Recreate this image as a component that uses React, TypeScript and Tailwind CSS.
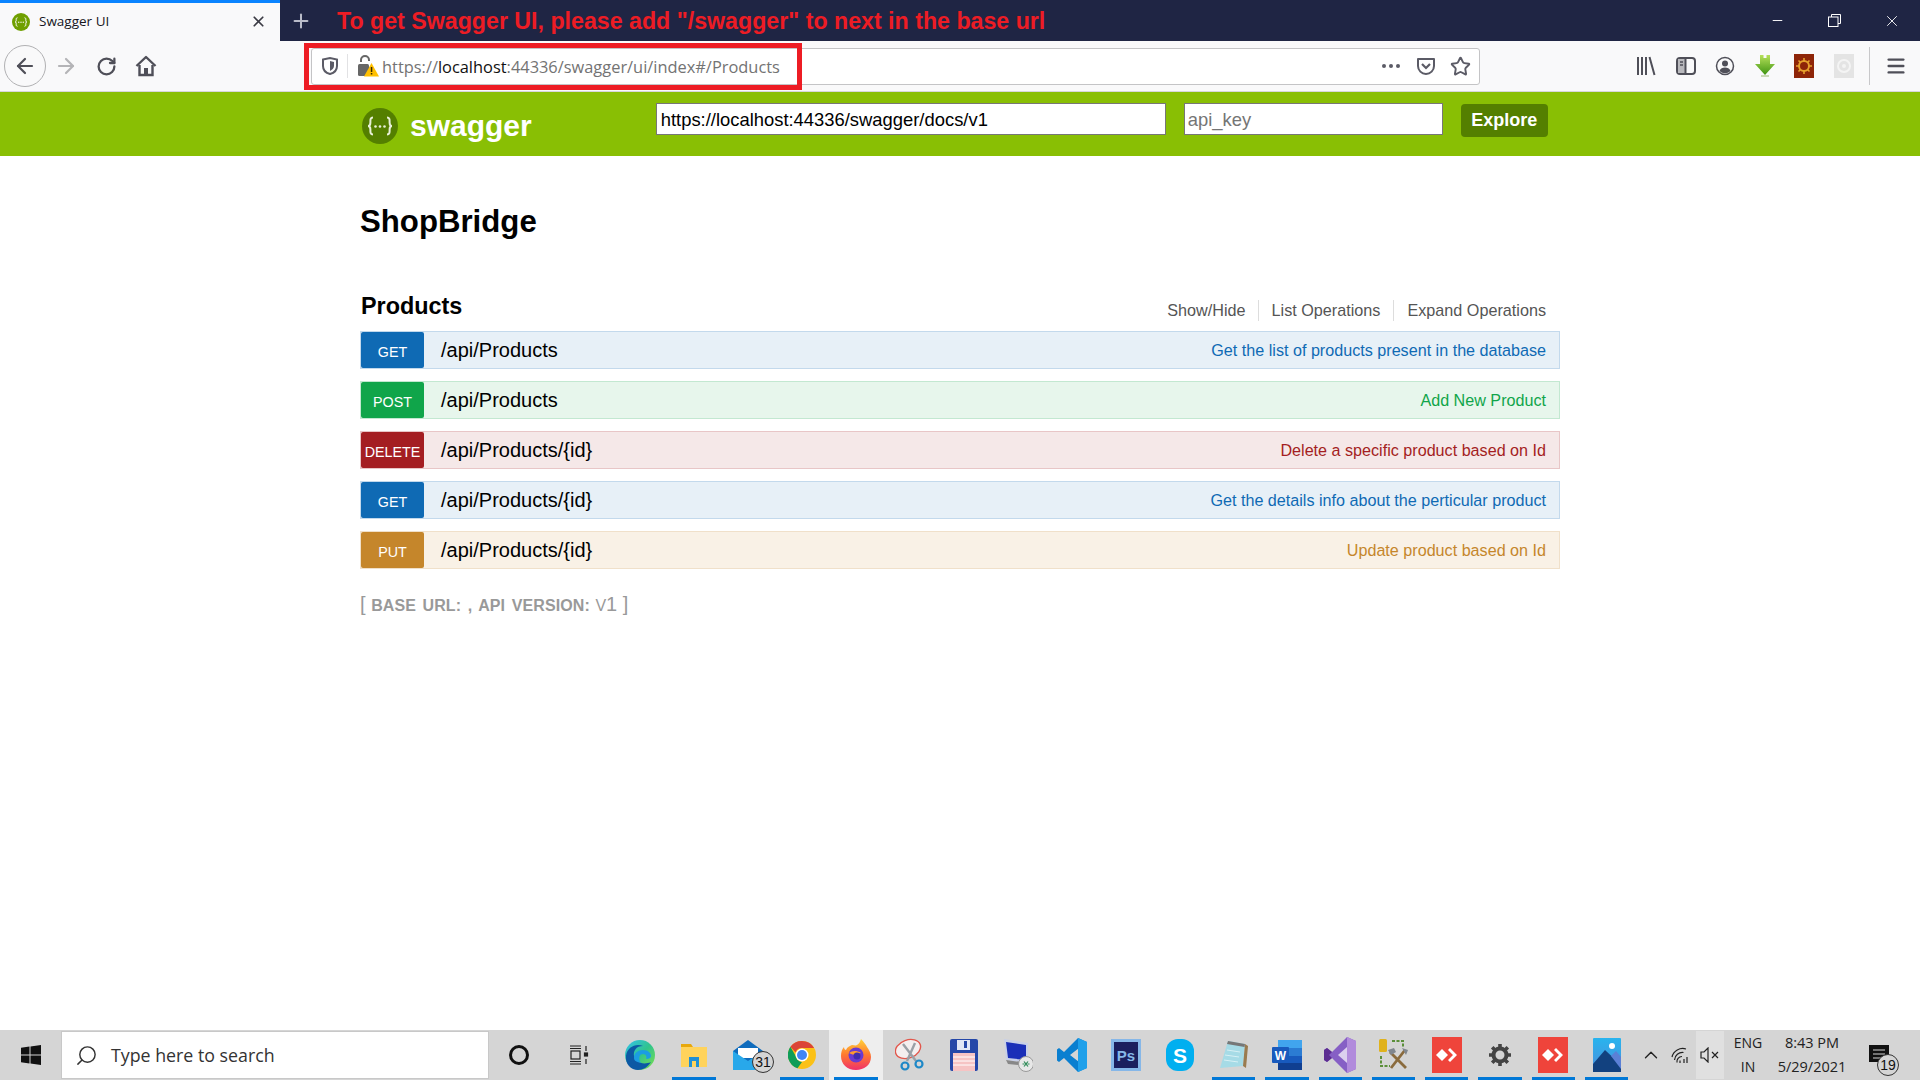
import { Minus, Plus, RotateCw, ArrowLeft, ArrowRight, X, Star, Menu, ChevronUp, Search } from "lucide-react";
import type { ReactNode } from "react";

// Swagger endpoints listed on the page
const endpoints = [
  {
    method: "GET",
    path: "/api/Products",
    summary: "Get the list of products present in the database",
    bar: "bg-[#e7f0f7] border-[#c3d9ec]",
    badge: "bg-[#0f6ab4]",
    text: "text-[#0f6ab4]",
  },
  {
    method: "POST",
    path: "/api/Products",
    summary: "Add New Product",
    bar: "bg-[#e7f6ec] border-[#c3e8d1]",
    badge: "bg-[#10a54a]",
    text: "text-[#10a54a]",
  },
  {
    method: "DELETE",
    path: "/api/Products/{id}",
    summary: "Delete a specific product based on Id",
    bar: "bg-[#f5e8e8] border-[#e8c6c7]",
    badge: "bg-[#a41e22]",
    text: "text-[#a41e22]",
  },
  {
    method: "GET",
    path: "/api/Products/{id}",
    summary: "Get the details info about the perticular product",
    bar: "bg-[#e7f0f7] border-[#c3d9ec]",
    badge: "bg-[#0f6ab4]",
    text: "text-[#0f6ab4]",
  },
  {
    method: "PUT",
    path: "/api/Products/{id}",
    summary: "Update product based on Id",
    bar: "bg-[#f9f1e6] border-[#f0e0ca]",
    badge: "bg-[#c5862b]",
    text: "text-[#c5862b]",
  },
];

const SwaggerMark = ({ size, bg, fg }: { size: number; bg: string; fg: string }) => (
  <svg width={size} height={size} viewBox="0 0 36 36">
    <circle cx="18" cy="18" r="18" fill={bg} />
    <path
      d="M11 9.500c-3 0-2.600 2.500-2.600 5 0 2-.6 3.500-2.400 3.500 1.800 0 2.400 1.500 2.400 3.500 0 2.500-.4 5 2.600 5M25 9.500c3 0 2.600 2.500 2.600 5 0 2 .6 3.500 2.400 3.500-1.800 0-2.400 1.500-2.400 3.500 0 2.500.4 5-2.600 5"
      fill="none"
      stroke={fg}
      strokeWidth="2"
    />
    <circle cx="13.500" cy="18.500" r="1.300" fill={fg} />
    <circle cx="18" cy="18.500" r="1.300" fill={fg} />
    <circle cx="22.500" cy="18.500" r="1.300" fill={fg} />
  </svg>
);

const ShieldIcon = () => (
  <svg width="18" height="20" viewBox="0 0 18 20" fill="none">
    <path d="M2 3.500 9 2l7 1.500V10c0 4-3 7-7 8-4-1-7-4-7-8z" stroke="#5b5b66" strokeWidth="2" />
    <path d="M9 5l4 1v4c0 2-2 4-4 5z" fill="#5b5b66" />
  </svg>
);

const LockWarnIcon = () => (
  <svg width="22" height="24" viewBox="0 0 22 24">
    <path d="M4 8V6a4 4 0 0 1 8 0v1" fill="none" stroke="#666" strokeWidth="2" />
    <rect x="1" y="10" width="11" height="12" rx="1.500" fill="#666" />
    <path d="M14.500 9 22 22.500H7z" fill="#ffbf00" />
    <rect x="13.800" y="13" width="1.500" height="5" fill="#3b2a00" />
    <rect x="13.800" y="19" width="1.500" height="1.500" fill="#3b2a00" />
  </svg>
);

const HomeIcon = () => (
  <svg width="22" height="22" viewBox="0 0 22 22" fill="none">
    <path d="M1.500 11 11 2l9.500 9" stroke="#4f4f58" strokeWidth="2.400" strokeLinejoin="round" />
    <path d="M4.500 10v10h13V10" stroke="#4f4f58" strokeWidth="2.400" />
    <rect x="9" y="13" width="4" height="7" fill="#4f4f58" />
  </svg>
);

const PocketIcon = () => (
  <svg width="20" height="20" viewBox="0 0 20 20" fill="none">
    <path d="M2 3h16v7a8 8 0 0 1-16 0z" stroke="#5b5b66" strokeWidth="2" strokeLinejoin="round" />
    <path d="m6 8 4 4 4-4" stroke="#5b5b66" strokeWidth="2.200" />
  </svg>
);

const LibraryIcon = () => (
  <svg width="20" height="20" viewBox="0 0 20 20" stroke="#4f4f58" strokeWidth="2" fill="none">
    <path d="M2 1v18M6 1v18M10 1v18M13.500 1l5 18" />
  </svg>
);

const SidebarIcon = () => (
  <svg width="20" height="20" viewBox="0 0 20 20" fill="none">
    <rect x="1" y="2" width="18" height="16" rx="3" stroke="#4f4f58" strokeWidth="2" />
    <rect x="2" y="3" width="7" height="14" fill="#b9b9bd" />
    <path d="M9.500 2v16" stroke="#4f4f58" strokeWidth="2" />
    <path d="M4 6h3M4 9h3" stroke="#4f4f58" strokeWidth="1.500" />
  </svg>
);

const ProfileIcon = () => (
  <svg width="20" height="20" viewBox="0 0 20 20" fill="none">
    <circle cx="10" cy="10" r="8.500" stroke="#4f4f58" strokeWidth="1.500" />
    <circle cx="10" cy="7.500" r="3" fill="#4f4f58" />
    <path d="M4.500 15c1-3 3-3.500 5.500-3.500s4.500.5 5.500 3.500a8 8 0 0 1-11 0z" fill="#4f4f58" />
  </svg>
);

const GreenArrowIcon = () => (
  <svg width="20" height="24" viewBox="0 0 20 24">
    <defs>
      <linearGradient id="dl" x1="0" y1="0" x2="0" y2="1">
        <stop offset="0" stopColor="#b6e05a" />
        <stop offset="1" stopColor="#3f9412" />
      </linearGradient>
    </defs>
    <path d="M0 10h5V1h3.500v3h3V1H15v9h5L10 21z" fill="url(#dl)" />
    <rect x="6" y="21" width="8" height="2" fill="#c9d8b5" />
  </svg>
);

const GearBoxIcon = () => (
  <svg width="20" height="24" viewBox="0 0 20 24">
    <rect width="20" height="24" fill="#8e2508" />
    <circle cx="10" cy="12" r="5" fill="none" stroke="#e6a02c" strokeWidth="2" />
    <path d="M10 4v3M10 17v3M2 12h3M15 12h3M4.500 6.500l2 2M13.500 15.500l2 2M4.500 17.500l2-2M13.500 8.500l2-2" stroke="#e6a02c" strokeWidth="1.600" />
  </svg>
);

const PaleTileIcon = () => (
  <svg width="20" height="24" viewBox="0 0 20 24">
    <rect width="20" height="24" fill="#e4e4e4" />
    <circle cx="10" cy="12" r="6" fill="none" stroke="#f4f4f4" strokeWidth="2" />
    <circle cx="10" cy="12" r="2" fill="#f4f4f4" />
  </svg>
);

const WindowsIcon = () => (
  <svg width="20" height="20" viewBox="0 0 20 20" fill="#111">
    <path d="M0 2.800 8.500 1.600v7.900H0zM9.500 1.500 20 0v9.500H9.500zM0 10.500h8.500v7.900L0 17.200zM9.500 10.500H20V20L9.500 18.500z" />
  </svg>
);

const TaskViewIcon = () => (
  <svg width="20" height="20" viewBox="0 0 20 20" fill="none" stroke="#222" strokeWidth="1.200">
    <path d="M1 1h11M1 19h11M1 3.500h11M1 16.500h11" />
    <rect x="2" y="6" width="9" height="8" />
    <path d="M17 1v5M17 14v5" />
    <rect x="15.500" y="8" width="3" height="3" fill="#222" />
  </svg>
);

const EdgeIcon = () => (
  <svg width="32" height="32" viewBox="0 0 32 32">
    <defs>
      <linearGradient id="edgeA" x1="0" y1="0" x2="1" y2="1">
        <stop offset="0" stopColor="#35c1f1" />
        <stop offset="0.500" stopColor="#2fc48d" />
        <stop offset="1" stopColor="#7fe04a" />
      </linearGradient>
    </defs>
    <circle cx="16" cy="16" r="15" fill="url(#edgeA)" />
    <path d="M2 17C3 8 12 4 19 7c-7 0-10 5-9 10s8 10 17 6c-3 5-8 8-13 8C7 31 1 25 2 17z" fill="#0c59a4" />
    <path d="M10 19c0-5 4-8 9-8 5 0 8 3 8 6 0 2-2 3-5 3 1-2 0-5-3-5-4 0-5 5-2 9-4-1-7-2-7-5z" fill="#1b9de2" />
  </svg>
);

const FolderIcon = () => (
  <svg width="28" height="28" viewBox="0 0 28 28">
    <path d="M1 3h10l2 3h-12z" fill="#e8a80c" />
    <rect x="1" y="6" width="26" height="20" fill="#ffd35c" />
    <rect x="9" y="16" width="10" height="10" fill="#1f8fd6" />
    <rect x="12" y="20" width="4" height="6" fill="#ffd35c" />
  </svg>
);

const MailIcon = () => (
  <svg width="30" height="30" viewBox="0 0 30 30">
    <path d="M0 11 15 0l15 11v19H0z" fill="#0f6cbd" />
    <path d="M5 8h20v10H5z" fill="#fff" />
    <path d="M0 11l15 10 15-10v19H0z" fill="#28a8ea" />
  </svg>
);

const CountBadge = ({ value }: { value: string }) => (
  <span className="absolute flex h-[22px] w-[22px] items-center justify-center rounded-full border border-[#333] bg-[#d4d4d4] text-[14px] leading-none text-[#111]">
    {value}
  </span>
);

const ChromeIcon = () => (
  <svg width="28" height="32" viewBox="0 0 28 28">
    <circle cx="14" cy="14" r="14" fill="#fbc116" />
    <path d="M14 0a14 14 0 0 1 12.100 7H14a7 7 0 0 0-6.500 4.300L2.400 5.800A14 14 0 0 1 14 0z" fill="#db4437" />
    <path d="M2.400 5.800 8 15.500a7 7 0 0 0 6 5.500L9.500 27.300A14 14 0 0 1 2.400 5.800z" fill="#0f9d58" />
    <circle cx="14" cy="14" r="6.500" fill="#fff" />
    <circle cx="14" cy="14" r="5" fill="#4285f4" />
  </svg>
);

const FirefoxIcon = () => (
  <svg width="30" height="32" viewBox="0 0 30 32">
    <defs>
      <linearGradient id="ffA" x1="0.500" y1="0" x2="0.500" y2="1">
        <stop offset="0" stopColor="#ffd43a" />
        <stop offset="0.500" stopColor="#ff7a2e" />
        <stop offset="1" stopColor="#f0306b" />
      </linearGradient>
    </defs>
    <path d="M15 31C6 31 0 25 0 17c0-4 1-7 3-9 0 2 1 3 2 3 1-3 4-4 6-5 2 0 4 1 5 0 2-1 3-3 4-6 3 3 5 6 6 8 2 3 4 6 4 10 0 8-7 13-15 13z" fill="url(#ffA)" />
    <circle cx="15" cy="16" r="7.500" fill="#6a3ad0" />
    <path d="M8 14c3-2 7-3 12 0-3 0-4 1-5 2-2 0-5-1-7-2z" fill="#ff9a2e" />
    <circle cx="16" cy="17" r="3.500" fill="#3f2db0" />
  </svg>
);

const SnipIcon = () => (
  <svg width="30" height="34" viewBox="0 0 30 34" fill="none">
    <ellipse cx="13" cy="11" rx="13" ry="9" stroke="#e2574c" strokeWidth="1.400" fill="#f4efef" transform="rotate(-20 13 11)" />
    <path d="M8 6l13 17M20 5 12 23" stroke="#9aa0a6" strokeWidth="2.400" />
    <circle cx="10" cy="28" r="3.500" stroke="#1e88c7" strokeWidth="2.200" />
    <circle cx="24" cy="26" r="3.500" stroke="#1e88c7" strokeWidth="2.200" />
  </svg>
);

const FloppyIcon = () => (
  <svg width="28" height="32" viewBox="0 0 28 32">
    <rect width="28" height="32" rx="2" fill="#2447a8" />
    <rect x="7" y="1" width="13" height="10" fill="#dfe6f5" />
    <rect x="14" y="2" width="3" height="7" fill="#2447a8" />
    <rect x="3" y="14" width="22" height="18" fill="#f6c4c4" />
    <path d="M3 18h22M3 22h22M3 26h22" stroke="#fff" strokeWidth="1" />
  </svg>
);

const RemoteDesktopIcon = () => (
  <svg width="30" height="34" viewBox="0 0 30 34">
    <path d="M1 1l24 4v20L3 22z" fill="#c8d0e8" />
    <path d="M3 4l20 3v15L5 20z" fill="#1a2fb8" />
    <path d="M3 22l22 3v3L5 26z" fill="#888" />
    <circle cx="23" cy="26" r="7.500" fill="#e8e8e8" stroke="#999" />
    <path d="M19.500 26h2M24.500 26h2M21 23.500l2 2.500-2 2.500M25 23.500l-2 2.500 2 2.500" stroke="#2e8b57" strokeWidth="1.200" fill="none" />
  </svg>
);

const VscodeIcon = () => (
  <svg width="30" height="36" viewBox="0 0 30 36">
    <path d="M21 1 7 15 2 11 0 12.500v11L2 25l5-4 14 14 9-4V5zm1 10v14l-9-7z" fill="#0a7fd0" />
    <path d="M21 1l9 4v26l-9 4z" fill="#1fa0ea" />
  </svg>
);

const PhotoshopIcon = () => (
  <span className="flex h-[32px] w-[30px] items-center justify-center border-[3px] border-[#86b7e8] bg-[#1b1f5e] text-[15px] font-bold leading-none text-[#86b7e8]">
    Ps
  </span>
);

const SkypeIcon = () => (
  <span className="flex h-[32px] w-[28px] items-center justify-center rounded-[12px] bg-[#00aff0] text-[21px] font-bold leading-none text-white">
    S
  </span>
);

const NotepadIcon = () => (
  <svg width="30" height="32" viewBox="0 0 30 32">
    <path d="M9 2l17 3-2 22L1 29z" fill="#a6dbe6" />
    <path d="M26 5l3 2-2 22-3-2z" fill="#9a7b4f" />
    <path d="M9 2l17 3-.5 3L8 5z" fill="#777" />
    <path d="M8 11l13 2M6 16l14 2M5 21l14 2" stroke="#d7f0f5" strokeWidth="1" />
  </svg>
);

const WordIcon = () => (
  <svg width="30" height="32" viewBox="0 0 30 32">
    <rect x="6" y="1" width="24" height="8" fill="#41a5ee" />
    <rect x="6" y="9" width="24" height="8" fill="#2b7cd3" />
    <rect x="6" y="17" width="24" height="7" fill="#185abd" />
    <rect x="6" y="24" width="24" height="7" fill="#103f91" />
    <rect y="8" width="17" height="16" rx="1" fill="#185abd" />
    <text x="8.500" y="21" textAnchor="middle" fontFamily="Liberation Sans" fontSize="12" fontWeight="700" fill="#fff">W</text>
  </svg>
);

const VisualStudioIcon = () => (
  <svg width="32" height="36" viewBox="0 0 32 36">
    <path d="M23 0l9 4v28l-9 4L8 21 3 25 0 23V13l3-2 5 4z" fill="#865fc5" />
    <path d="M0 13l3-2 5 4-3 3 3 3-5 4-3-2z" fill="#5c2d91" />
    <path d="M23 0l9 4v28l-9 4z" fill="#b18bdc" />
    <path d="M23 10v16l-9-8z" fill="#dcd0ee" />
  </svg>
);

const ToolsIcon = () => (
  <svg width="32" height="34" viewBox="0 0 32 34" fill="none">
    <rect x="1" y="1" width="8" height="13" rx="1.500" fill="#e0b21c" />
    <path d="M14 3h11v7M3 18v10h9" stroke="#5b8f3a" strokeWidth="2" strokeDasharray="3 1.500" />
    <path d="M12 14l16 16M27 12 13 30" stroke="#8a6b3d" strokeWidth="2.800" />
    <path d="M10 12l6-2 2 4-5 3zM24 10l6 2-2 5z" fill="#80878f" />
  </svg>
);

const AnyDeskIcon = () => (
  <svg width="30" height="36" viewBox="0 0 30 36">
    <rect width="30" height="36" fill="#ef443b" />
    <path d="M10 12l6 6-6 6-6-6z" fill="#fff" />
    <path d="M18 11l7 7-7 7-2-2 5-5-5-5z" fill="#fff" />
  </svg>
);

const GearIcon = () => (
  <svg width="24" height="24" viewBox="0 0 24 24" fill="none" stroke="#444">
    <circle cx="12" cy="12" r="6.500" strokeWidth="4" />
    <path d="M12 1v5M12 18v5M1 12h5M18 12h5M4.200 4.200l3.500 3.500M16.300 16.300l3.500 3.500M4.200 19.800l3.500-3.500M16.300 7.700l3.500-3.500" strokeWidth="3.600" />
  </svg>
);

const PhotosIcon = () => (
  <svg width="28" height="34" viewBox="0 0 28 34">
    <defs>
      <linearGradient id="sky" x1="0" y1="0" x2="0" y2="1">
        <stop offset="0" stopColor="#28b4ee" />
        <stop offset="1" stopColor="#4c8edd" />
      </linearGradient>
    </defs>
    <rect width="28" height="34" rx="1" fill="url(#sky)" />
    <circle cx="19" cy="8" r="3" fill="#fff" />
    <path d="M0 26l12-14 16 15v7H0z" fill="#12417f" />
    <path d="M18 18l5-5 5 6v12z" fill="#5b80d6" />
  </svg>
);

const WifiArcsIcon = () => (
  <svg width="18" height="18" viewBox="0 0 18 18" fill="none" stroke="#222" strokeWidth="1.200">
    <path d="M1 11a11 11 0 0 1 14-8M3.500 14a8 8 0 0 1 9-7.500M6 16.500a5 5 0 0 1 5-6" />
    <path d="M9 17v-2.500M13 17v-4M16 17v-6" />
  </svg>
);

const SpeakerMutedIcon = () => (
  <svg width="20" height="16" viewBox="0 0 20 16" fill="none" stroke="#222" strokeWidth="1.200">
    <path d="M1 5h3l4-4v14l-4-4H1z" />
    <path d="m12 5 6 6M18 5l-6 6" />
  </svg>
);

type Tile = { icon: ReactNode; bar?: boolean; active?: boolean };

const taskbarTiles: Tile[] = [
  { icon: <EdgeIcon /> },
  { icon: <FolderIcon />, bar: true },
  {
    icon: (
      <span className="relative flex">
        <MailIcon />
        <span className="absolute left-[19px] top-[11px]"><CountBadge value="31" /></span>
      </span>
    ),
  },
  { icon: <ChromeIcon />, bar: true },
  { icon: <FirefoxIcon />, bar: true, active: true },
  { icon: <SnipIcon /> },
  { icon: <FloppyIcon /> },
  { icon: <RemoteDesktopIcon /> },
  { icon: <VscodeIcon /> },
  { icon: <PhotoshopIcon /> },
  { icon: <SkypeIcon /> },
  { icon: <NotepadIcon />, bar: true },
  { icon: <WordIcon />, bar: true },
  { icon: <VisualStudioIcon />, bar: true },
  { icon: <ToolsIcon />, bar: true },
  { icon: <AnyDeskIcon />, bar: true },
  { icon: <GearIcon />, bar: true },
  { icon: <AnyDeskIcon />, bar: true },
  { icon: <PhotosIcon />, bar: true },
];

const App = () => {
  return (
    <div className="relative flex h-screen flex-col overflow-hidden bg-white font-['Liberation_Sans',Arial,sans-serif]">
      {/* Browser tab strip */}
      <div className="flex h-[41px] shrink-0 items-stretch bg-[#1f2544]">
        <div className="flex w-[280px] items-center border-t-[3px] border-[#0a84ff] bg-[#f9f9fa] pb-[1px] pl-[12px] pr-[13px]">
          <SwaggerMark size={18} bg="#6f9f00" fg="#ffffff" />
          <span className="ml-[9px] font-['Open_Sans',sans-serif] text-[13.5px] text-[#16161d]">Swagger UI</span>
          <X size={17} className="ml-auto text-[#3b3b44]" strokeWidth={2.4} />
        </div>
        <div className="flex w-[41px] items-center justify-center">
          <Plus size={22} className="text-[#b9bcc9]" strokeWidth={2.2} />
        </div>
        <div className="ml-[16px] flex items-center whitespace-nowrap pt-[2px] text-[23.2px] font-bold leading-none text-[#ed1c24]">
          To get Swagger UI, please add "/swagger" to next in the base url
        </div>
        <div className="ml-auto flex items-center text-white">
          <div className="flex w-[57px] justify-center"><Minus size={15} strokeWidth={1.5} /></div>
          <div className="flex w-[57px] justify-center">
            <svg width="13" height="13" viewBox="0 0 13 13" fill="none" stroke="#fff">
              <path d="M3.500 3V.5h9v9H10" />
              <rect x=".5" y="3" width="9.500" height="9.500" />
            </svg>
          </div>
          <div className="flex w-[57px] justify-center"><X size={18} strokeWidth={1.2} /></div>
        </div>
      </div>

      {/* Navigation toolbar */}
      <div className="flex h-[51px] shrink-0 items-center border-b border-[#d7d7db] bg-[#f9f9fa]">
        <div className="ml-[4px] flex h-[42px] w-[42px] items-center justify-center rounded-full border border-[#b1b1b3]">
          <ArrowLeft size={24} color="#4f4f58" strokeWidth={2.2} />
        </div>
        <ArrowRight size={24} color="#b4b4b7" strokeWidth={2.2} className="ml-[8px]" />
        <RotateCw size={21} color="#4f4f58" strokeWidth={2.6} className="ml-[18px]" />
        <span className="ml-[18px] flex"><HomeIcon /></span>

        {/* Address bar */}
        <div className="ml-[154px] flex h-[37px] w-[1169px] items-center rounded-[3px] border border-[#c4c4c6] bg-white">
          <span className="ml-[9px] flex"><ShieldIcon /></span>
          <span className="ml-[8px] h-[24px] border-l border-[#e2e2e4]" />
          <span className="ml-[9px] flex"><LockWarnIcon /></span>
          <span className="ml-[3px] whitespace-nowrap pt-[2px] font-['Open_Sans',sans-serif] text-[16.4px] text-[#737373]">
            https://<span className="text-[#111]">localhost</span>:44336/swagger/ui/index#/Products
          </span>
          <div className="ml-auto flex items-center pr-[8px]">
            <span className="flex gap-[3px]">
              <span className="h-[4px] w-[4px] rounded-full bg-[#5b5b66]" />
              <span className="h-[4px] w-[4px] rounded-full bg-[#5b5b66]" />
              <span className="h-[4px] w-[4px] rounded-full bg-[#5b5b66]" />
            </span>
            <span className="ml-[16px] flex"><PocketIcon /></span>
            <Star size={21} color="#5b5b66" strokeWidth={2.2} className="ml-[14px]" />
          </div>
        </div>

        {/* Toolbar extensions */}
        <div className="ml-[156px] flex w-[20px] justify-center"><LibraryIcon /></div>
        <div className="ml-[19.5px] flex w-[20px] justify-center"><SidebarIcon /></div>
        <div className="ml-[19.5px] flex w-[20px] justify-center"><ProfileIcon /></div>
        <div className="ml-[19.5px] flex w-[20px] justify-center"><GreenArrowIcon /></div>
        <div className="ml-[19.5px] flex w-[20px] justify-center"><GearBoxIcon /></div>
        <div className="ml-[19.5px] flex w-[20px] justify-center"><PaleTileIcon /></div>
        <span className="ml-[15px] h-[38px] border-l border-[#c8c8ca]" />
        <Menu size={22} color="#4f4f58" strokeWidth={2.6} className="ml-[15px]" />
      </div>

      {/* Red annotation box over the address bar */}
      <div className="pointer-events-none absolute left-[304px] top-[43px] h-[47px] w-[498px] border-[5px] border-[#ed1c24]" />

      {/* Swagger header */}
      <div className="flex h-[64px] shrink-0 items-start justify-center bg-[#89bf04]">
        <div className="flex w-[1200px]">
          <div className="ml-[2px] mt-[16px] flex items-center">
            <SwaggerMark size={36} bg="#547f00" fg="#e8f0d8" />
            <span className="ml-[12px] -mt-[1px] text-[30px] font-bold leading-[36px] text-white">swagger</span>
          </div>
          <input
            readOnly
            value="https://localhost:44336/swagger/docs/v1"
            className="ml-[124px] mt-[11px] h-[32px] w-[510px] border border-[#777] bg-white px-[4px] pt-[1px] text-[18.4px] text-black outline-none"
          />
          <input
            readOnly
            placeholder="api_key"
            className="ml-[18px] mt-[11px] h-[32px] w-[259px] border border-[#777] bg-white px-[3px] pt-[1px] text-[18.4px] text-black outline-none placeholder:text-[#757575]"
          />
          <button className="ml-[18px] mt-[12px] h-[33px] w-[87px] rounded-[4px] bg-[#547f00] text-[18px] font-bold text-white">
            Explore
          </button>
        </div>
      </div>

      {/* Swagger content */}
      <div className="mx-auto w-[1200px] flex-1 pt-[46px]">
        <h1 className="text-[31.2px] font-bold leading-[40px] text-black">ShopBridge</h1>

        <div className="mt-[49px] flex h-[40px] items-start justify-between">
          <h2 className="ml-[1px] text-[23.4px] font-bold leading-[30px] text-black">Products</h2>
          <div className="mt-[9px] flex pr-[14px] text-[16.2px] leading-[21px] text-[#555]">
            <span className="border-r border-[#ddd] pr-[12px]">Show/Hide</span>
            <span className="border-r border-[#ddd] px-[13px]">List Operations</span>
            <span className="pl-[13px]">Expand Operations</span>
          </div>
        </div>

        <div className="flex flex-col gap-[12px]">
          {endpoints.map((item, i) => (
            <div key={i} className={`flex h-[38px] items-center border pr-[13px] ${item.bar}`}>
              <span className={`flex h-[36px] w-[63px] items-center justify-center rounded-[2px] pt-[5px] text-[14.3px] text-white ${item.badge}`}>
                {item.method}
              </span>
              <span className="ml-[17px] text-[20px] text-black">{item.path}</span>
              <span className={`ml-auto text-[16.15px] ${item.text}`}>{item.summary}</span>
            </div>
          ))}
        </div>

        <div className="mt-[23px] text-[20px] leading-[24px] text-[#999]">
          [ <span className="text-[16px] font-bold tracking-[0.1px] [word-spacing:2px]">BASE URL: , API VERSION:</span> <span className="text-[16px]">V</span>1 ]
        </div>
      </div>

      {/* Windows taskbar */}
      <div className="flex h-[50px] shrink-0 items-stretch bg-[#d5d5d5]">
        <div className="flex w-[61px] items-center justify-center"><WindowsIcon /></div>
        <div className="my-[1px] flex w-[428px] items-center border border-[#c8c8c8] bg-white pl-[13px]">
          <Search size={23} color="#333" strokeWidth={1.5} className="-scale-x-100" />
          <span className="ml-[13px] font-['Open_Sans',sans-serif] text-[17.8px] text-[#333]">Type here to search</span>
        </div>
        <div className="flex w-[60px] items-center justify-center">
          <span className="h-[20px] w-[20px] rounded-full border-[3px] border-[#111]" />
        </div>
        <div className="flex w-[60px] items-center justify-center"><TaskViewIcon /></div>
        <div className="w-[4px]" />

        {/* Pinned apps */}
        {taskbarTiles.map((tile, i) => (
          <div
            key={i}
            className={`relative flex items-center justify-center ${i < 11 ? "w-[54px]" : "w-[53.3px]"} ${tile.active ? "bg-[#eeeeee]" : ""}`}
          >
            {tile.icon}
            {tile.bar && <span className="absolute bottom-0 left-[5px] right-[5px] h-[3px] bg-[#0078d7]" />}
          </div>
        ))}

        {/* System tray */}
        <div className="ml-auto flex items-center text-[#222]">
          <ChevronUp size={22} strokeWidth={1.5} />
          <span className="ml-[9px] flex"><WifiArcsIcon /></span>
          <div className="ml-[7px] flex h-[48px] w-[28px] items-center justify-center bg-[#e0e0e0]">
            <SpeakerMutedIcon />
          </div>
          <div className="ml-[2px] flex w-[44px] flex-col items-center font-['Open_Sans',sans-serif] text-[14px] leading-[24px]">
            <span>ENG</span>
            <span>IN</span>
          </div>
          <div className="ml-[6px] flex w-[72px] flex-col items-center font-['Open_Sans',sans-serif] text-[14.5px] leading-[24px]">
            <span>8:43 PM</span>
            <span>5/29/2021</span>
          </div>
          <div className="relative ml-[21px] mr-[29px] h-[32px] w-[22px]">
            <svg width="20" height="18" viewBox="0 0 20 18" className="mt-[6px]">
              <path d="M0 0h20v17H0z" fill="#111" />
              <path d="M4 5h12M4 9h12M4 13h8" stroke="#d5d5d5" strokeWidth="1.2" />
            </svg>
            <span className="absolute left-[8px] top-[15px]"><CountBadge value="19" /></span>
          </div>
        </div>
      </div>
    </div>
  );
};

export default App;
